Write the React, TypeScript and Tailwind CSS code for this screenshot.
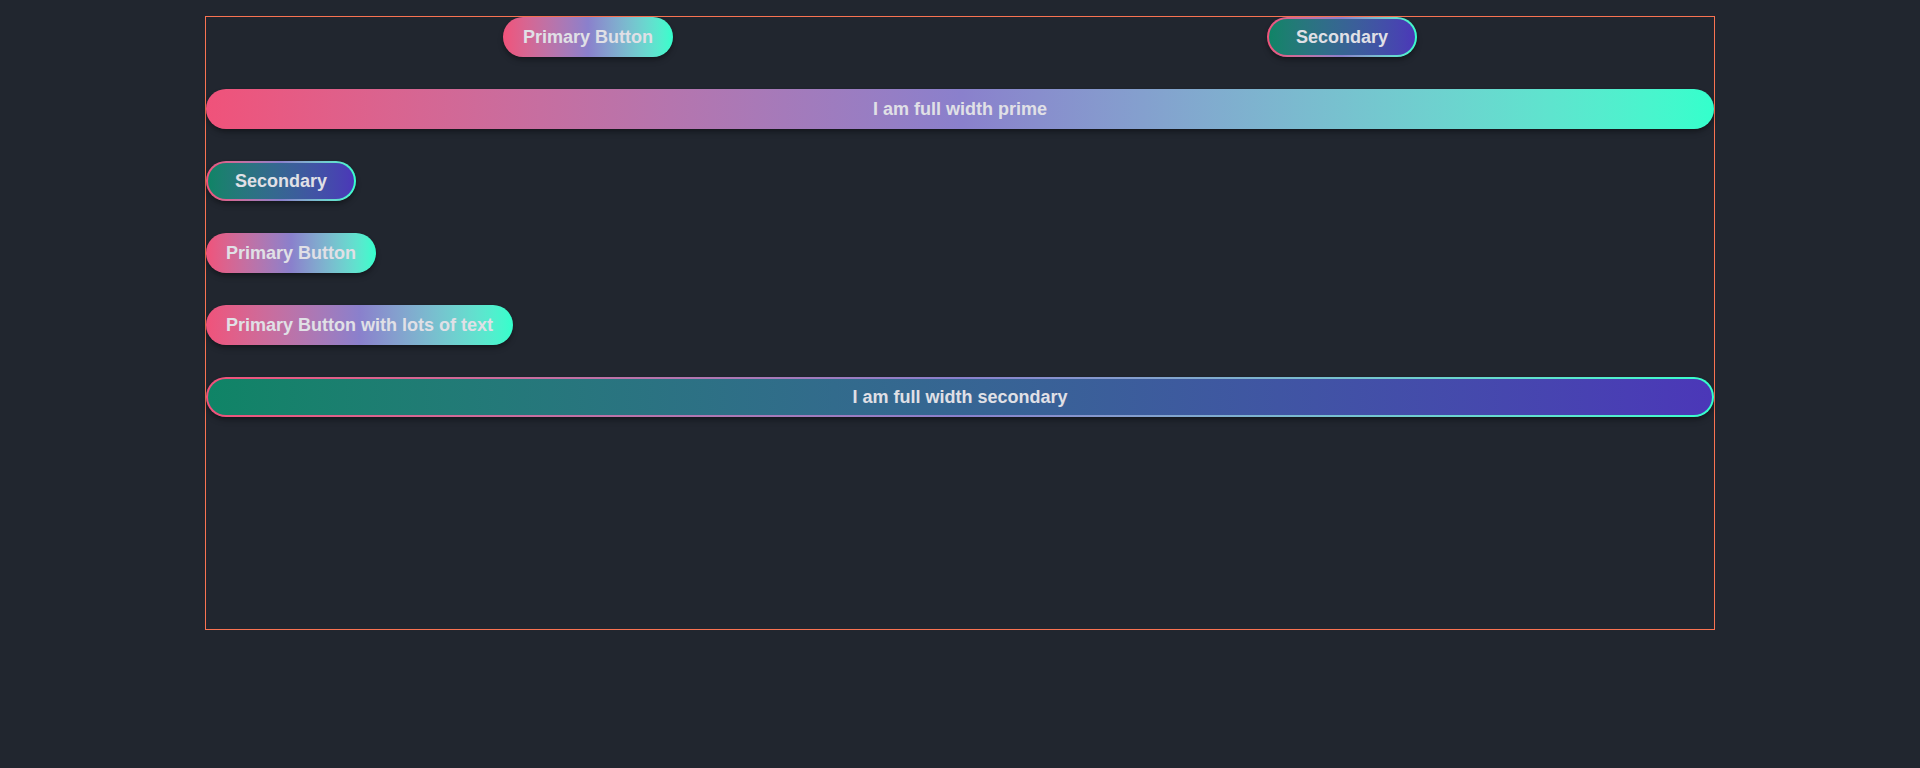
import type { ReactNode } from 'react';

function PrimaryButton({ children, full }: { children: ReactNode; full?: boolean }) {
  return (
    <button
      className={`${full ? 'w-full' : ''} rounded-full bg-gradient-to-r from-[#f0527a] via-[#8a80cc] to-[#33ffcc] px-5 py-1.5 text-lg leading-7 font-bold text-[#e0e0e6] shadow-md shadow-black/30`}
    >
      {children}
    </button>
  );
}

function SecondaryButton({ children, full }: { children: ReactNode; full?: boolean }) {
  return (
    <div
      className={`${full ? 'w-full' : ''} rounded-full bg-gradient-to-r from-[#f0527a] via-[#8a80cc] to-[#33ffcc] p-[2px] shadow-md shadow-black/30`}
    >
      <button
        className={`${full ? 'w-full' : ''} rounded-full bg-gradient-to-r from-[#0f8466] to-[#4b37b8] px-[27px] py-1 text-lg leading-7 font-bold text-[#e0e0e6]`}
      >
        {children}
      </button>
    </div>
  );
}

export default function App() {
  return (
    <div className="min-h-screen bg-[#21262f] pt-4 font-['Liberation_Sans',Arial,sans-serif]">
      <div className="mx-auto h-[614px] w-[1510px] border border-[#f97352]">
        <div className="flex flex-col items-start gap-8">
          <div className="flex w-full justify-around">
            <PrimaryButton>Primary Button</PrimaryButton>
            <SecondaryButton>Secondary</SecondaryButton>
          </div>
          <PrimaryButton full>I am full width prime</PrimaryButton>
          <SecondaryButton>Secondary</SecondaryButton>
          <PrimaryButton>Primary Button</PrimaryButton>
          <PrimaryButton>Primary Button with lots of text</PrimaryButton>
          <SecondaryButton full>I am full width secondary</SecondaryButton>
        </div>
      </div>
    </div>
  );
}
